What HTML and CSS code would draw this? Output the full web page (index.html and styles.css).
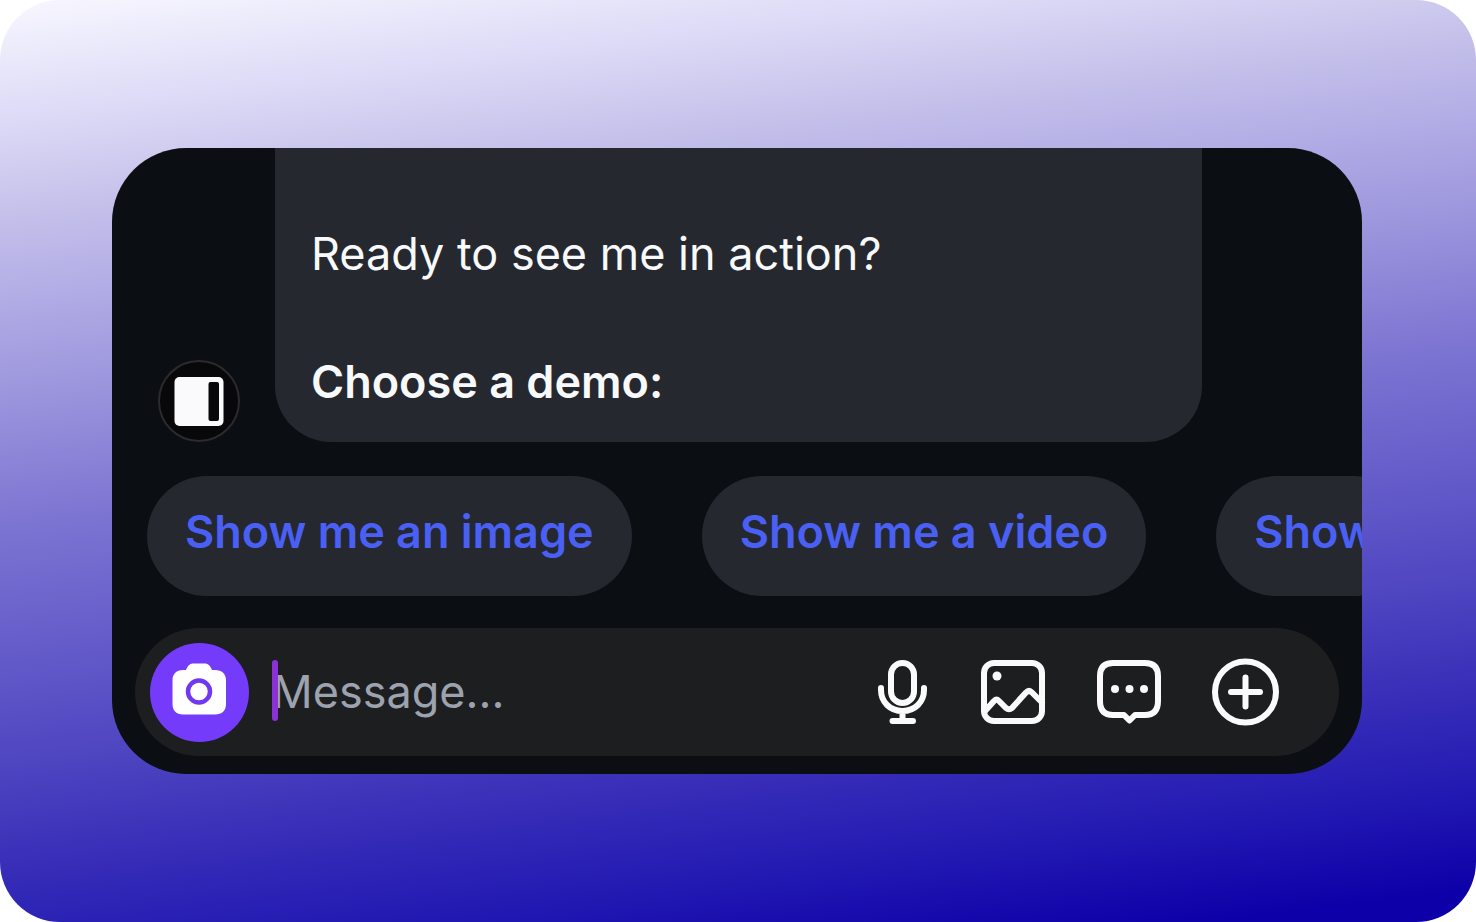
FILE: index.html
```html
<!DOCTYPE html>
<html lang="en">
<head>
  <meta charset="UTF-8" />
  <meta name="viewport" content="width=device-width, initial-scale=1.0"/>
  <title>Chat demo</title>
  <link rel="stylesheet" href="styles.css">
</head>
<body>

  <main class="stage">
    <section class="chat">

      <div class="thread">
        <svg class="avatar" viewBox="0 0 82 82" aria-hidden="true">
          <circle cx="41" cy="41" r="40" fill="#08080a" stroke="#2b2b2e" stroke-width="2"/>
          <rect x="16.500" y="17" width="49" height="49" rx="5" fill="#fafafc"/>
          <rect x="50.500" y="22" width="10.500" height="39" rx="2" fill="#08080a"/>
        </svg>
        <div class="bubble">
          <p>Ready to see me in action?</p>
          <p class="strong">Choose a demo:</p>
        </div>
      </div>

      <div class="replies">
        <button type="button" class="reply">Show me an image</button>
        <button type="button" class="reply">Show me a video</button>
        <button type="button" class="reply">Show</button>
      </div>

      <form class="composer">
        <button type="button" class="camera" aria-label="Camera">
          <svg viewBox="0 0 99 99">
            <path d="M36 27C38 22 40 20.500 44 20.500H54C58 20.500 60 22 62 27H65C72 27 76 31 76 37V61C76 67.500 72 71.500 65 71.500H33C26.500 71.500 22.500 67.500 22.500 61V37C22.500 31 26.500 27 33 27Z" fill="#fff"/>
            <circle cx="49" cy="48.500" r="11" fill="#fff" stroke="#7039f0" stroke-width="4.500"/>
          </svg>
        </button>
        <div class="field">
          <span class="caret"></span>
          <input type="text" class="message" placeholder="Message..." aria-label="Message">
        </div>
        <div class="tools">
          <button type="button" class="tool" aria-label="Voice message">
            <svg viewBox="0 0 68 68">
              <rect x="28" y="5" width="23" height="40" rx="11.500"/>
              <path d="M18 30V32C18 44 27 53 39.500 53S61 44 61 32V30M39.500 53V62M29.500 63H50"/>
            </svg>
          </button>
          <button type="button" class="tool" aria-label="Photo">
            <svg viewBox="0 0 68 68">
              <rect x="5" y="5" width="58" height="58" rx="10"/>
              <path d="M6 53L15 43Q17.500 40.500 20 43L27 50Q30 52.500 33 50L47 34.500Q50 31.500 53 34.500L63 44.500"/>
              <circle class="dot" cx="18" cy="18" r="4.500"/>
            </svg>
          </button>
          <button type="button" class="tool" aria-label="Saved replies">
            <svg viewBox="0 0 68 68">
              <path d="M18 5H50Q63 5 63 18V43Q63 57 50 57H40L34.500 62.500L29 57H18Q5 57 5 43V18Q5 5 18 5Z"/>
              <circle class="dot" cx="20" cy="31" r="4"/>
              <circle class="dot" cx="34.500" cy="31" r="4"/>
              <circle class="dot" cx="49" cy="31" r="4"/>
            </svg>
          </button>
          <button type="button" class="tool" aria-label="More">
            <svg viewBox="0 0 68 68">
              <circle cx="34.500" cy="34" r="30.500"/>
              <path d="M34.500 19.500V48.500M20 34H49"/>
            </svg>
          </button>
        </div>
      </form>

    </section>
  </main>

</body>
</html>
```
FILE: styles.css
```css
* {
  box-sizing: border-box;
}

body {
  margin: 0;
  background: #fff;
  font-family: Inter, "Liberation Sans", sans-serif;
  font-size: 45px;
  line-height: 64px;
}

button, input {
  font: inherit;
  border: none;
  padding: 0;
  margin: 0;
  background: none;
}

button {
  cursor: pointer;
}

svg {
  display: block;
}

.stage {
  min-height: 100vh;
  padding: 148px 114px 148px 112px;
  border-radius: 60px;
  background: linear-gradient(173deg, #f8f7ff 0%, #dcdaf6 11%, #c6c2eb 19%, #b2ade5 27%, #9b95dd 36%, #7e76d2 47%, #655cca 59%, #4f46c1 69%, #372db8 79%, #2219b2 88%, #0e00a8 97%);
}

.chat {
  border-radius: 74px;
  background: #0b0e12;
  overflow: hidden;
  padding-bottom: 18px;
}

.thread {
  display: flex;
  align-items: flex-end;
  gap: 35px;
  padding: 0 160px 0 46px;
}

.avatar {
  width: 82px;
  height: 82px;
  flex: none;
}

.bubble {
  flex: 1;
  padding: 74px 36px 28px;
  border-radius: 0 0 56px 56px;
  background: #25282f;
  color: #f8f9fb;
}

.bubble p {
  margin: 0;
}

.bubble .strong {
  margin-top: 64px;
  font-weight: 600;
}

.replies {
  display: flex;
  gap: 70px;
  padding: 34px 0 32px 35px;
}

.reply {
  flex: none;
  height: 120px;
  padding: 0 38px 8px;
  border-radius: 60px;
  background: #25282f;
  color: #4a60f4;
  font-weight: 600;
}

.composer {
  display: flex;
  align-items: center;
  height: 128px;
  margin: 0 23px;
  padding: 0 60px 0 15px;
  border-radius: 64px;
  background: #1d1e20;
}

.camera {
  flex: none;
  width: 99px;
  height: 99px;
  border-radius: 50%;
  background: #743bfb;
}

.field {
  position: relative;
  flex: 1;
  min-width: 0;
  margin-left: 23px;
}

.message {
  display: block;
  width: 100%;
  color: #f8f9fb;
  outline: none;
}

.message::placeholder {
  color: #9ca3af;
  opacity: 1;
}

/* insertion mark in front of the placeholder */
.caret {
  position: absolute;
  top: 0;
  left: 0;
  width: 6px;
  height: 61px;
  border-radius: 3px;
  background: #8b31d8;
}

.tools {
  display: flex;
  gap: 48px;
}

.tool svg {
  width: 68px;
  height: 68px;
  fill: none;
  stroke: #fafafa;
  stroke-width: 6;
  stroke-linecap: round;
  stroke-linejoin: round;
}

.tool .dot {
  fill: #fafafa;
  stroke: none;
}
```
